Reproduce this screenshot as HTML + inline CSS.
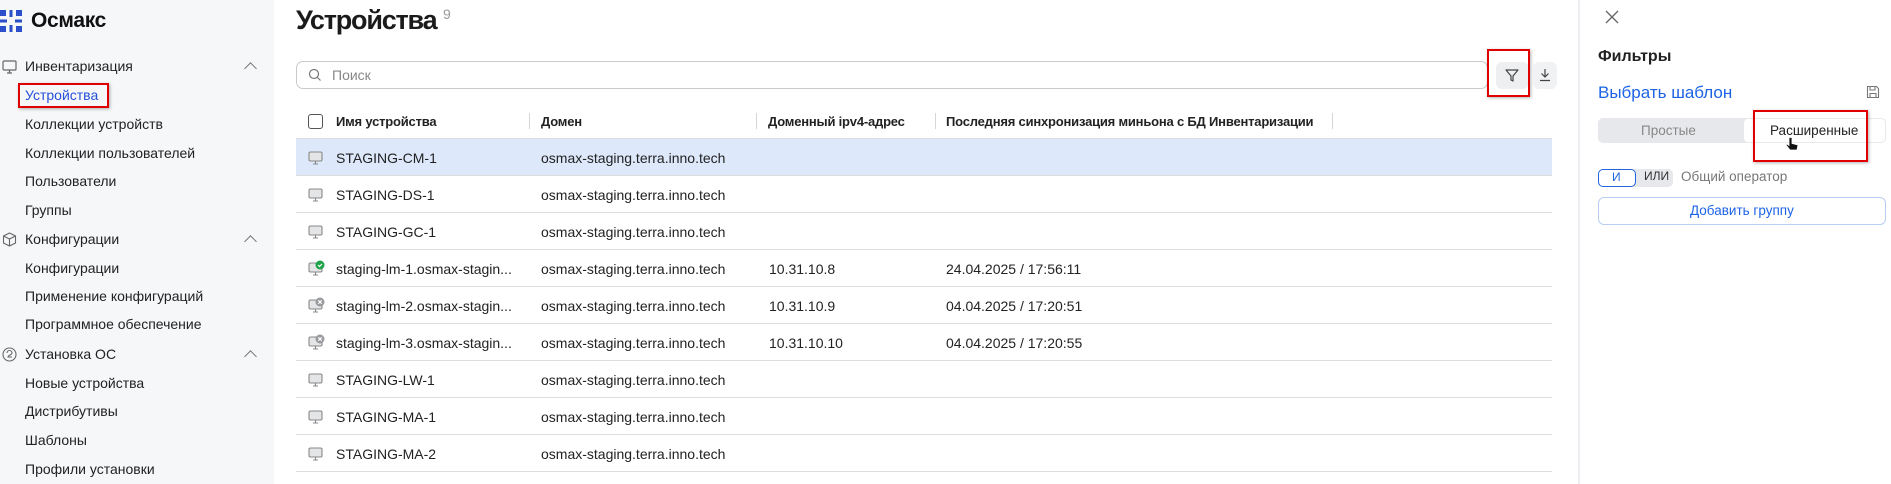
<!DOCTYPE html>
<html><head><meta charset="utf-8"><style>
*{box-sizing:border-box;margin:0;padding:0}
body{width:1891px;height:484px;overflow:hidden;background:#fff;font-family:"Liberation Sans","DejaVu Sans",sans-serif;color:#222;position:relative;font-size:14px}
.a{position:absolute;white-space:nowrap}
.side{position:absolute;left:0;top:0;width:274px;height:484px;background:#f6f7f9}
.mi{position:absolute;left:25px;font-size:14px;color:#222}
.chev{position:absolute;left:246px;width:9px;height:9px;border-left:1.3px solid #777;border-top:1.3px solid #777;transform:rotate(45deg)}
.row{position:absolute;left:296px;width:1256px;height:37px;border-bottom:1px solid #dcdde0}
.row span{position:absolute;top:11px;font-size:14px;color:#222}
.hd{position:absolute;top:114px;font-size:13px;font-weight:bold;color:#222;letter-spacing:-0.2px}
.dv{position:absolute;top:113px;width:1px;height:16px;background:#d5d6d9}
</style></head><body>
<div class="side"></div>
<svg class="a" style="left:0;top:10px" width="24" height="24" viewBox="0 0 24 24"><g fill="#2a4fc9"><rect x="0" y="0" width="6" height="6"/><rect x="16" y="0" width="6" height="6"/><rect x="0" y="16" width="6" height="6"/><rect x="16" y="16" width="6" height="6"/><rect x="9.5" y="0" width="3" height="7"/><rect x="9.5" y="15" width="3" height="7"/><rect x="0" y="9.5" width="7" height="3"/><rect x="15" y="9.5" width="7" height="3"/></g></svg>
<div class="a" style="left:31px;top:9px;font-size:21px;font-weight:bold;color:#111;letter-spacing:-0.3px">Осмакс</div>

<svg class="a" style="left:2px;top:60px" width="15" height="14" viewBox="0 0 15 14"><rect x="1" y="1" width="13" height="9" rx="1" fill="none" stroke="#666" stroke-width="1.2"/><path d="M5 13h5M7.5 10v3" stroke="#666" stroke-width="1.2"/></svg>
<div class="mi" style="top:58px">Инвентаризация</div><div class="chev" style="top:64px"></div>
<div class="a" style="left:18px;top:83px;width:91px;height:25px;border:2px solid #e10000;box-shadow:1px 1px 3px rgba(0,0,0,.3)"></div>
<div class="mi" style="top:87px;color:#2650d8">Устройства</div>
<div class="mi" style="top:116px">Коллекции устройств</div>
<div class="mi" style="top:145px">Коллекции пользователей</div>
<div class="mi" style="top:173px">Пользователи</div>
<div class="mi" style="top:202px">Группы</div>
<svg class="a" style="left:2px;top:232px" width="15" height="15" viewBox="0 0 15 15"><path d="M7.5 1L13.5 4v7l-6 3-6-3V4z M1.5 4l6 3 6-3 M7.5 7v7" fill="none" stroke="#666" stroke-width="1.1"/></svg>
<div class="mi" style="top:231px">Конфигурации</div><div class="chev" style="top:237px"></div>
<div class="mi" style="top:260px">Конфигурации</div>
<div class="mi" style="top:288px">Применение конфигураций</div>
<div class="mi" style="top:316px">Программное обеспечение</div>
<svg class="a" style="left:2px;top:347px" width="15" height="15" viewBox="0 0 15 15"><circle cx="7.5" cy="7.5" r="6.5" fill="none" stroke="#666" stroke-width="1.1"/><path d="M5 6a2.5 2.5 0 0 1 5 0c0 2-4 2-4 4h4" fill="none" stroke="#666" stroke-width="1.1"/></svg>
<div class="mi" style="top:346px">Установка ОС</div><div class="chev" style="top:352px"></div>
<div class="mi" style="top:375px">Новые устройства</div>
<div class="mi" style="top:403px">Дистрибутивы</div>
<div class="mi" style="top:432px">Шаблоны</div>
<div class="mi" style="top:461px">Профили установки</div>

<div class="a" style="left:296px;top:5px;font-size:27px;font-weight:bold;color:#1b1b1b;letter-spacing:-1.2px">Устройства</div>
<div class="a" style="left:443px;top:6px;font-size:14px;color:#999">9</div>

<div class="a" style="left:296px;top:61px;width:1192px;height:28px;border:1px solid #c9cacd;border-radius:7px"></div>
<svg class="a" style="left:308px;top:68px" width="14" height="14" viewBox="0 0 14 14"><circle cx="6" cy="6" r="4.5" fill="none" stroke="#777" stroke-width="1.2"/><path d="M9.5 9.5l3 3" stroke="#777" stroke-width="1.2"/></svg>
<div class="a" style="left:332px;top:67px;font-size:14px;color:#888">Поиск</div>
<div class="a" style="left:1496px;top:62px;width:33px;height:27px;background:#eeeff1;border-radius:6px"></div>
<svg class="a" style="left:1504px;top:67px" width="16" height="16" viewBox="0 0 16 16"><path d="M2 3h12l-5 6v5l-2-1V9z" fill="none" stroke="#444" stroke-width="1.2" stroke-linejoin="round"/></svg>
<div class="a" style="left:1487px;top:49px;width:43px;height:48px;border:2px solid #e10000;box-shadow:1px 1px 3px rgba(0,0,0,.3)"></div>
<div class="a" style="left:1533px;top:62px;width:24px;height:27px;background:#f1f2f4;border-radius:6px"></div>
<svg class="a" style="left:1538px;top:68px" width="14" height="14" viewBox="0 0 14 14"><path d="M7 1v8M3.5 5.5L7 9l3.5-3.5M2 12.5h10" fill="none" stroke="#444" stroke-width="1.2"/></svg>

<div class="a" style="left:308px;top:114px;width:15px;height:15px;border:1.3px solid #555;border-radius:3px"></div>
<div class="hd" style="left:336px">Имя устройства</div>
<div class="dv" style="left:529px"></div><div class="hd" style="left:541px">Домен</div>
<div class="dv" style="left:756px"></div><div class="hd" style="left:768px">Доменный ipv4-адрес</div>
<div class="dv" style="left:935px"></div><div class="hd" style="left:946px">Последняя синхронизация миньона с БД Инвентаризации</div>
<div class="dv" style="left:1332px"></div>
<div class="a" style="left:296px;top:138px;width:1256px;height:1px;background:#dcdde0"></div>

<svg width="0" height="0" style="position:absolute"><defs><g id="pc"><rect x="1" y="1" width="13" height="9" rx="1.5" fill="#e4e5e7" stroke="#888" stroke-width="1.1"/><path d="M5 13h5M7.5 10v3" stroke="#888" stroke-width="1.1"/></g></defs></svg>

<div class="row" style="top:139px;background:#dde8fb"><svg style="position:absolute;left:12px;top:12px" width="16" height="15"><use href="#pc"/></svg><span style="left:40px">STAGING-CM-1</span><span style="left:245px">osmax-staging.terra.inno.tech</span></div>
<div class="row" style="top:176px"><svg style="position:absolute;left:12px;top:12px" width="16" height="15"><use href="#pc"/></svg><span style="left:40px">STAGING-DS-1</span><span style="left:245px">osmax-staging.terra.inno.tech</span></div>
<div class="row" style="top:213px"><svg style="position:absolute;left:12px;top:12px" width="16" height="15"><use href="#pc"/></svg><span style="left:40px">STAGING-GC-1</span><span style="left:245px">osmax-staging.terra.inno.tech</span></div>
<div class="row" style="top:250px"><svg style="position:absolute;left:12px;top:10px" width="18" height="17"><use href="#pc" y="2"/><circle cx="12" cy="5" r="4.5" fill="#1fa34a"/><path d="M10 5l1.5 1.5 2.5-2.5" stroke="#fff" stroke-width="1.2" fill="none"/></svg><span style="left:40px">staging-lm-1.osmax-stagin...</span><span style="left:245px">osmax-staging.terra.inno.tech</span><span style="left:473px">10.31.10.8</span><span style="left:650px">24.04.2025 / 17:56:11</span></div>
<div class="row" style="top:287px"><svg style="position:absolute;left:12px;top:10px" width="18" height="17"><use href="#pc" y="2"/><circle cx="12" cy="5" r="4.5" fill="#9a9b9e"/><path d="M10.3 3.3l3.4 3.4M13.7 3.3l-3.4 3.4" stroke="#fff" stroke-width="1.1"/></svg><span style="left:40px">staging-lm-2.osmax-stagin...</span><span style="left:245px">osmax-staging.terra.inno.tech</span><span style="left:473px">10.31.10.9</span><span style="left:650px">04.04.2025 / 17:20:51</span></div>
<div class="row" style="top:324px"><svg style="position:absolute;left:12px;top:10px" width="18" height="17"><use href="#pc" y="2"/><circle cx="12" cy="5" r="4.5" fill="#9a9b9e"/><path d="M10.3 3.3l3.4 3.4M13.7 3.3l-3.4 3.4" stroke="#fff" stroke-width="1.1"/></svg><span style="left:40px">staging-lm-3.osmax-stagin...</span><span style="left:245px">osmax-staging.terra.inno.tech</span><span style="left:473px">10.31.10.10</span><span style="left:650px">04.04.2025 / 17:20:55</span></div>
<div class="row" style="top:361px"><svg style="position:absolute;left:12px;top:12px" width="16" height="15"><use href="#pc"/></svg><span style="left:40px">STAGING-LW-1</span><span style="left:245px">osmax-staging.terra.inno.tech</span></div>
<div class="row" style="top:398px"><svg style="position:absolute;left:12px;top:12px" width="16" height="15"><use href="#pc"/></svg><span style="left:40px">STAGING-MA-1</span><span style="left:245px">osmax-staging.terra.inno.tech</span></div>
<div class="row" style="top:435px"><svg style="position:absolute;left:12px;top:12px" width="16" height="15"><use href="#pc"/></svg><span style="left:40px">STAGING-MA-2</span><span style="left:245px">osmax-staging.terra.inno.tech</span></div>

<div class="a" style="left:1578px;top:0;width:2px;height:484px;background:#eceef1"></div>
<svg class="a" style="left:1605px;top:10px" width="14" height="14" viewBox="0 0 14 14"><path d="M1 1l12 12M13 1L1 13" stroke="#666" stroke-width="1.3"/></svg>
<div class="a" style="left:1598px;top:48px;font-size:16px;font-weight:bold;color:#222">Фильтры</div>
<div class="a" style="left:1598px;top:83px;font-size:17px;color:#1d63e6">Выбрать шаблон</div>
<svg class="a" style="left:1866px;top:85px" width="14" height="14" viewBox="0 0 14 14"><path d="M1.5 1.5h9l2 2v9h-11z M4 1.5v3.5h5V1.5 M4 12.5V8.5h6v4" fill="none" stroke="#777" stroke-width="1.1"/></svg>
<div class="a" style="left:1598px;top:118px;width:288px;height:25px;background:#e7e8eb;border-radius:5px"></div>
<div class="a" style="left:1744px;top:119px;width:141px;height:23px;background:#fff;border-radius:4px"></div>
<div class="a" style="left:1641px;top:123px;font-size:13.5px;color:#888">Простые</div>
<div class="a" style="left:1770px;top:123px;font-size:13.5px;color:#222">Расширенные</div>
<div class="a" style="left:1753px;top:110px;width:115px;height:52px;border:2px solid #e10000;box-shadow:1px 1px 3px rgba(0,0,0,.3)"></div>
<svg class="a" style="left:1785px;top:136px" width="14" height="16" viewBox="0 0 14 16"><path d="M4 1.5v8l-2-1.5-1 1 4 5h7l1-5-6-1.5V1.5z" fill="#111" stroke="#fff" stroke-width="0.8"/></svg>
<div class="a" style="left:1598px;top:169px;width:75px;height:18px;background:#e7e8eb;border-radius:5px"></div>
<div class="a" style="left:1598px;top:169px;width:38px;height:18px;background:#fff;border:1.3px solid #2166e0;border-radius:5px"></div>
<div class="a" style="left:1612px;top:170px;font-size:12px;color:#2166e0">И</div>
<div class="a" style="left:1644px;top:169px;font-size:12px;color:#333">ИЛИ</div>
<div class="a" style="left:1681px;top:169px;font-size:13.5px;color:#777">Общий оператор</div>
<div class="a" style="left:1598px;top:197px;width:288px;height:28px;border:1px solid #b9cdf3;border-radius:6px"></div>
<div class="a" style="left:1690px;top:203px;font-size:13.5px;color:#1d63e6">Добавить группу</div>
</body></html>
